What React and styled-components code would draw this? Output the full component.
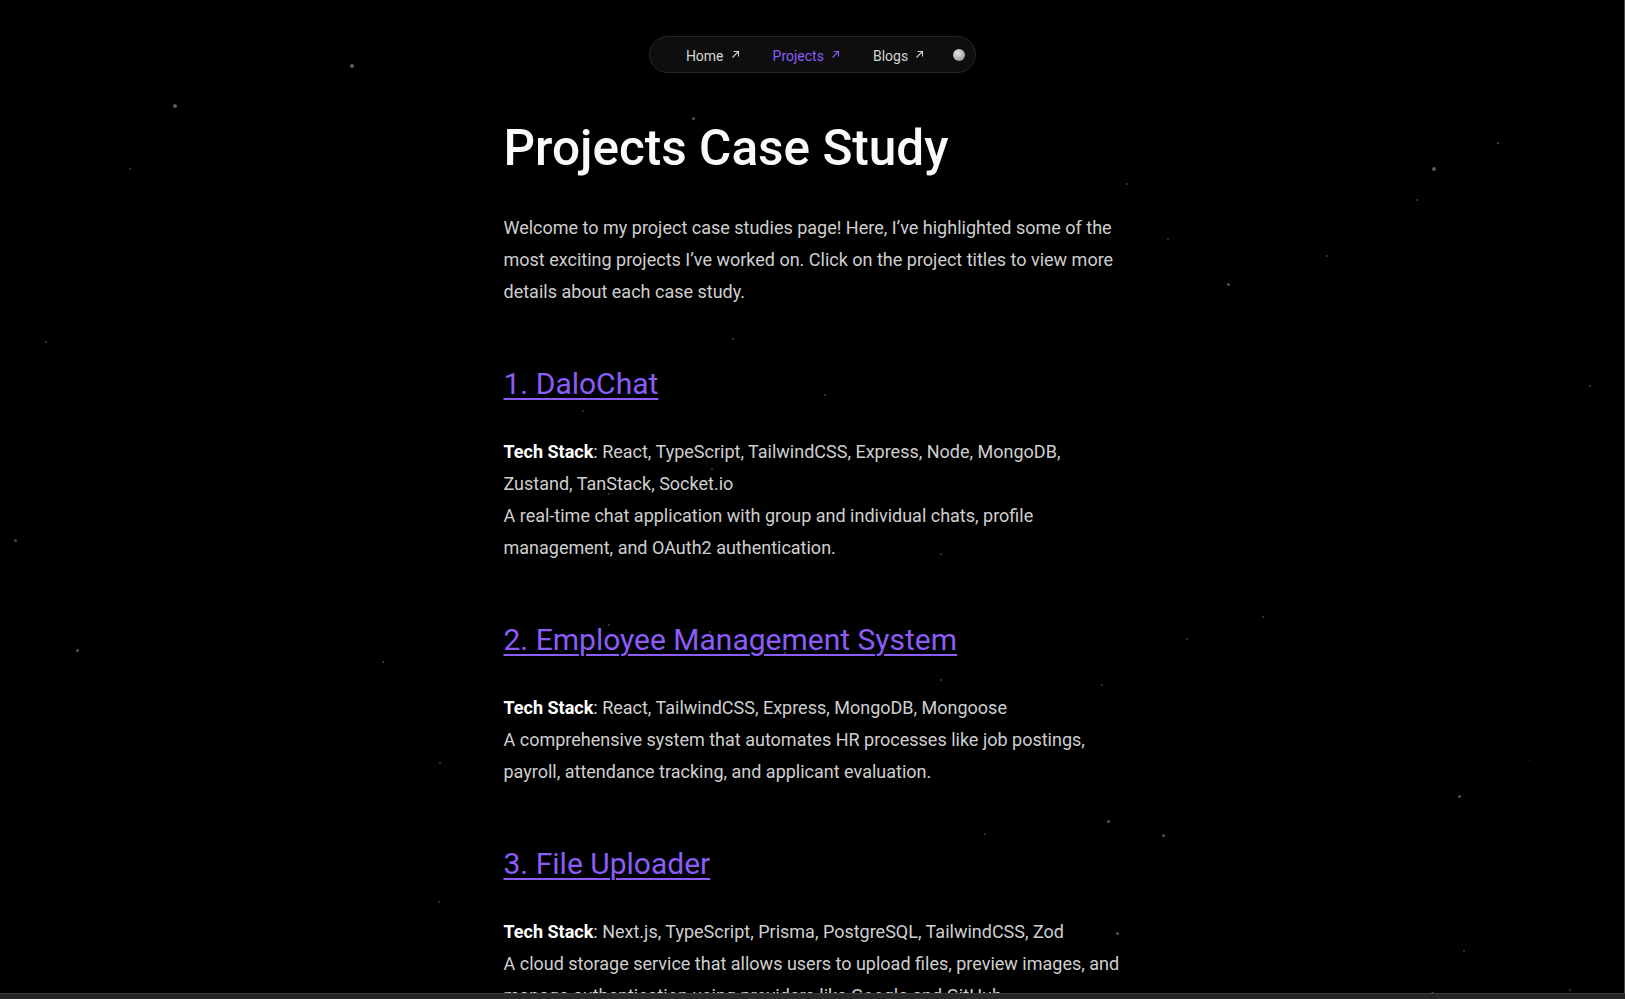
import React from "react";
import styled, { createGlobalStyle } from "styled-components";

const stars = [
  [352, 66, 4, 0.55], [175, 106, 4, 0.5], [693, 118, 3, 0.45], [130, 169, 1.5, 0.3],
  [1434, 169, 4, 0.5], [1498, 143, 2, 0.45], [1517, 166, 1, 0.3], [1127, 184, 1.5, 0.3],
  [1417, 200, 1.5, 0.3], [1168, 239, 1.5, 0.3], [1327, 256, 2, 0.35], [1228, 284, 3, 0.45],
  [46, 342, 1.5, 0.35], [733, 339, 2, 0.35], [825, 395, 2, 0.35], [583, 411, 2, 0.3],
  [1590, 386, 2.5, 0.4], [15, 540, 3, 0.4], [609, 494, 2, 0.35], [712, 469, 2, 0.35],
  [941, 554, 2, 0.35], [1263, 617, 1.5, 0.3], [77, 650, 3, 0.45], [197, 645, 1, 0.3],
  [383, 662, 2, 0.4], [1187, 639, 2, 0.35], [1102, 685, 2, 0.35], [941, 680, 2, 0.35],
  [1459, 796, 3, 0.45], [1529, 760, 1, 0.3], [440, 763, 1.5, 0.3], [1108, 821, 3, 0.45],
  [1163, 835, 3, 0.45], [985, 834, 2, 0.35], [1464, 951, 2, 0.35], [1117, 933, 3, 0.45],
  [439, 902, 1.5, 0.3], [1432, 993, 3, 0.45], [1570, 990, 2, 0.35], [710, 632, 2, 0.4],
  [609, 625, 1.5, 0.3], [785, 653, 1.5, 0.3],
];

const projects = [
  {
    title: "1. DaloChat",
    stack: "React, TypeScript, TailwindCSS, Express, Node, MongoDB, Zustand, TanStack, Socket.io",
    text: "A real-time chat application with group and individual chats, profile management, and OAuth2 authentication.",
  },
  {
    title: "2. Employee Management System",
    stack: "React, TailwindCSS, Express, MongoDB, Mongoose",
    text: "A comprehensive system that automates HR processes like job postings, payroll, attendance tracking, and applicant evaluation.",
  },
  {
    title: "3. File Uploader",
    stack: "Next.js, TypeScript, Prisma, PostgreSQL, TailwindCSS, Zod",
    text: "A cloud storage service that allows users to upload files, preview images, and manage authentication using providers like Google and GitHub.",
  },
];

const navLinks = [
  { label: "Home", active: false },
  { label: "Projects", active: true },
  { label: "Blogs", active: false },
];

function Arrow() {
  return (
    <svg width="9" height="9" viewBox="0 0 9 9" fill="none">
      <path d="M1.5 7.5L7.3 1.7M2.6 1.5H7.5V6.4" stroke="currentColor" strokeWidth="1.1" />
    </svg>
  );
}

export default function App() {
  return (
    <>
      <GlobalStyle />
      <Page>
        <Sky>
          {stars.map(([x, y, s, o], i) => (
            <Star key={i} style={{ left: x - s / 2, top: y - s / 2, width: s, height: s, opacity: o }} />
          ))}
        </Sky>

        <NavRow>
          <NavPill>
            {navLinks.map((l) => (
              <NavLink key={l.label} $active={l.active}>
                {l.label}
                <Arrow />
              </NavLink>
            ))}
            <ThemeDot />
          </NavPill>
        </NavRow>

        <Main>
          <Title>Projects Case Study</Title>
          <Intro>
            Welcome to my project case studies page! Here, I’ve highlighted some of the most
            exciting projects I’ve worked on. Click on the project titles to view more details
            about each case study.
          </Intro>

          {projects.map((p) => (
            <Project key={p.title}>
              <ProjectTitle href="#">{p.title}</ProjectTitle>
              <Body>
                <Label>Tech Stack</Label>: {p.stack}
              </Body>
              <Body>{p.text}</Body>
            </Project>
          ))}
        </Main>
      </Page>
      <RightEdge />
      <BottomBar />
    </>
  );
}

const GlobalStyle = createGlobalStyle`
  html {
    scrollbar-width: none;
    background: #000;
  }
  html::-webkit-scrollbar {
    display: none;
  }
  body {
    margin: 0;
    background: #000;
    font-family: Roboto, "Noto Sans", sans-serif;
    color: #cfcfcf;
  }
`;

const Page = styled.div`
  position: relative;
  min-height: 100vh;
  padding-top: 36px;
  overflow: hidden;
`;

const Sky = styled.div`
  position: absolute;
  inset: 0;
  pointer-events: none;
`;

const Star = styled.span`
  position: absolute;
  border-radius: 50%;
  background: #b5b5b5;
`;

const NavRow = styled.div`
  position: relative;
  display: flex;
  justify-content: center;
`;

const NavPill = styled.nav`
  display: flex;
  align-items: center;
  gap: 33px;
  height: 37px;
  box-sizing: border-box;
  padding: 0 10px 0 36px;
  border: 1px solid #262626;
  border-radius: 999px;
  background: #0e0e0e;
`;

const NavLink = styled.a`
  display: flex;
  align-items: center;
  gap: 7px;
  padding-top: 3px;
  font-size: 14px;
  color: ${(p) => (p.$active ? "#8b5cf6" : "#d4d4d4")};
  text-decoration: none;
  cursor: pointer;

  svg {
    margin-top: -3px;
  }
`;

const ThemeDot = styled.span`
  width: 12px;
  height: 12px;
  margin-left: -4px;
  border-radius: 50%;
  background: radial-gradient(circle at 40% 35%, #e6e6e6, #a0a0a0 70%, #8a8a8a);
`;

const Main = styled.main`
  position: relative;
  width: 618px;
  margin: 0 auto;
`;

const Title = styled.h1`
  margin: 45px 0 0;
  font-size: 49.5px;
  line-height: 60px;
  font-weight: 500;
  color: #fafafa;
`;

const Intro = styled.p`
  margin: 34px 0 0;
  font-size: 18px;
  line-height: 32px;
`;

const Project = styled.section`
  margin-top: 58px;
`;

const ProjectTitle = styled.a`
  display: block;
  margin-bottom: 34px;
  font-size: 30px;
  line-height: 36px;
  color: #8b5cf6;
  text-decoration: underline;
  text-decoration-thickness: 1.5px;
  text-underline-offset: 4px;
`;

const Body = styled.p`
  margin: 0;
  font-size: 18px;
  line-height: 32px;
`;

const Label = styled.strong`
  font-weight: 700;
  color: #fff;
`;

const RightEdge = styled.div`
  position: fixed;
  top: 0;
  right: 0;
  bottom: 0;
  width: 1px;
  background: #4a4a4a;
`;

const BottomBar = styled.div`
  position: fixed;
  left: 0;
  right: 0;
  bottom: 0;
  height: 5px;
  background: #262626;
  border-top: 1px solid #3c3c3c;
`;
